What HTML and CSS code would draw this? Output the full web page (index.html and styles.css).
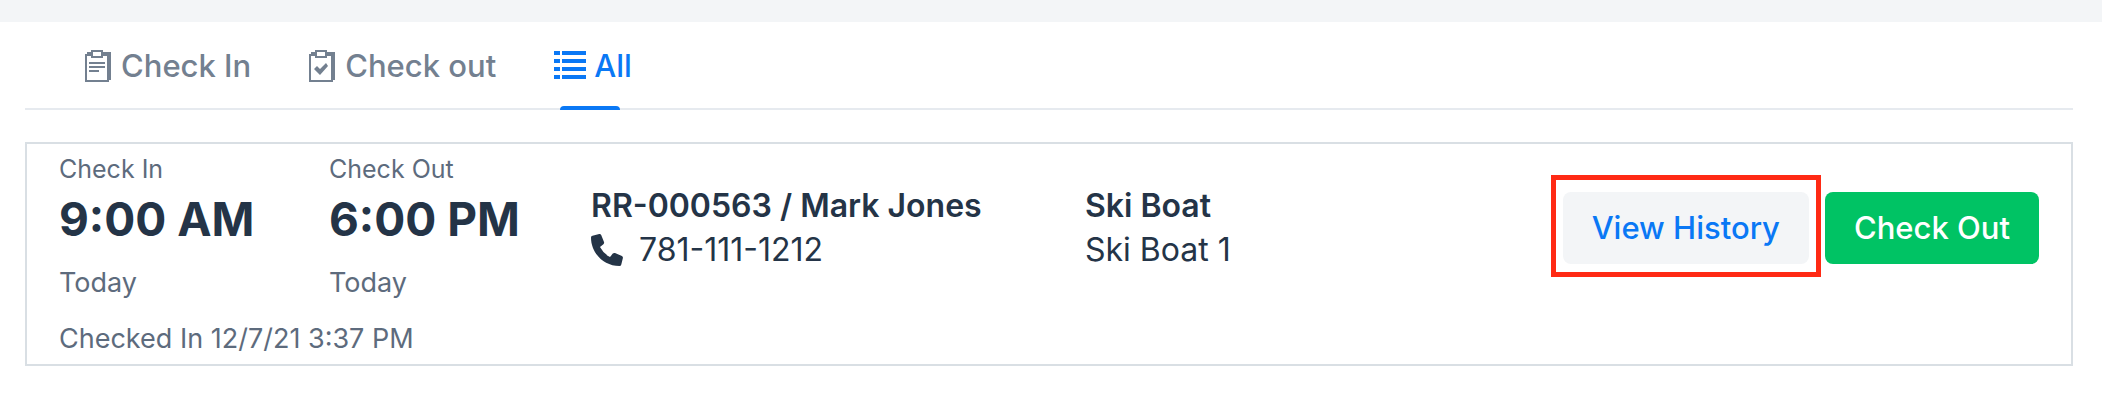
FILE: index.html
```html
<!DOCTYPE html>
<html lang="en">
<head>
    <meta charset="UTF-8">
    <meta name="viewport" content="width=device-width, initial-scale=1.0">
    <title>Reservations</title>
    <link rel="stylesheet" href="styles.css">
</head>
<body>
    <main class="container">
        <nav class="tabs">
            <a href="#" class="tab">
                <svg class="tab-icon" width="26" height="32" viewBox="0 0 26 32" fill="currentColor">
                    <path fill-rule="evenodd" d="M0 4H2V2H6V0H18V2H26V30H24V32H0ZM2 6V30H22V6H18V8H6V6ZM8 2V6H16V2Z"/>
                    <path d="M4 12H20V14H4ZM4 16H20V18H4ZM4 20H14V22H4Z"/>
                </svg>
                <span>Check In</span>
            </a>
            <a href="#" class="tab">
                <svg class="tab-icon" width="26" height="32" viewBox="0 0 26 32" fill="currentColor">
                    <path fill-rule="evenodd" d="M0 4H2V2H6V0H18V2H26V30H24V32H0ZM2 6V30H22V6H18V8H6V6ZM8 2V6H16V2Z"/>
                    <path d="M5 19L8 16L11 19L17 13L19 16L11 25Z"/>
                </svg>
                <span>Check out</span>
            </a>
            <a href="#" class="tab active">
                <svg class="tab-icon" width="32" height="32" viewBox="0 0 32 32" fill="currentColor">
                    <path d="M0 1H6V5H0ZM8 1H32V5H8ZM0 9H6V13H0ZM8 9H32V13H8ZM0 17H6V21H0ZM8 17H32V21H8ZM0 25H6V29H0ZM8 25H32V29H8Z"/>
                </svg>
                <span>All</span>
            </a>
        </nav>

        <section class="card">
            <div class="card-main">
                <div class="time-col">
                    <div class="label">Check In</div>
                    <div class="time">9:00 AM</div>
                    <div class="day">Today</div>
                </div>
                <div class="time-col">
                    <div class="label">Check Out</div>
                    <div class="time">6:00 PM</div>
                    <div class="day">Today</div>
                </div>
                <div class="info">
                    <div class="info-title">RR-000563 / Mark Jones</div>
                    <div class="phone">
                        <svg width="32" height="32" viewBox="0 0 32 32" fill="currentColor">
                            <path d="M1.5 1.8L8.2 .1Q9.600 -.1 10.200 1.100L13 8Q13.400 9.300 12.400 10.200L9 13Q12.500 19.800 19 23L21.800 19.600Q22.700 18.600 24 19L30.900 21.900Q32.100 22.600 31.900 23.900L30.300 30.500Q29.900 32 28.500 32C12.500 32 0 19 0 3.500Q0 2.100 1.500 1.800Z"/>
                        </svg>
                        <span>781-111-1212</span>
                    </div>
                </div>
                <div class="info">
                    <div class="info-title">Ski Boat</div>
                    <div>Ski Boat 1</div>
                </div>
                <div class="actions">
                    <div class="highlight">
                        <button type="button" class="btn btn-light">View History</button>
                    </div>
                    <button type="button" class="btn btn-success">Check Out</button>
                </div>
            </div>
            <div class="status">Checked In 12/7/21 3:37 PM</div>
        </section>
    </main>
</body>
</html>
```

FILE: styles.css
```css
:root {
    --primary-color: #0a78f5;
    --success-color: #00c364;
    --text-color: #243447;
    --label-color: #5d6b7d;
    --tab-color: #738090;
    --light-color: #f3f5f7;
    --border-color: #d9dfe4;
}

* {
    box-sizing: border-box;
}

body {
    margin: 0;
    border-top: 22px solid var(--light-color);
    background-color: white;
    color: var(--text-color);
    font-family: Inter, "Liberation Sans", sans-serif;
    font-size: 31px;
    line-height: 44px;
}

.container {
    padding: 0 29px 0 25px;
}

.tabs {
    display: flex;
    gap: 58px;
    padding-left: 60px;
    border-bottom: 2px solid #e6eaef;
}

.tab {
    position: relative;
    display: flex;
    align-items: center;
    gap: 10px;
    height: 86px;
    padding-top: 2px;
    color: var(--tab-color);
    font-weight: 500;
    text-decoration: none;
}

.tab.active {
    gap: 8px;
    color: var(--primary-color);
}

.tab.active::after {
    content: "";
    position: absolute;
    bottom: -2px;
    left: 6px;
    right: 12px;
    height: 4px;
    border-radius: 4px 4px 0 0;
    background-color: var(--primary-color);
}

.card {
    margin-top: 32px;
    padding: 7px 32px;
    border: 2px solid var(--border-color);
}

.card-main {
    display: grid;
    grid-template-columns: 270px 262px 494px 1fr auto;
    align-items: center;
}

.time-col {
    padding-bottom: 4px;
}

.label,
.day,
.status {
    color: var(--label-color);
    font-size: 27px;
    line-height: 36px;
}

.label {
    font-size: 25px;
}

.time {
    font-size: 46px;
    font-weight: 700;
    line-height: 64px;
}

.day {
    margin-top: 14px;
}

.status {
    margin-top: 16px;
}

.info {
    font-size: 32px;
}

.info-title {
    font-weight: 600;
}

.phone {
    display: flex;
    align-items: center;
    gap: 16px;
}

.actions {
    display: flex;
    gap: 16px;
}

.highlight {
    position: relative;
}

.highlight::after {
    content: "";
    position: absolute;
    inset: -17px -12px -13px;
    border: 5px solid #ff2a14;
    pointer-events: none;
}

.btn {
    height: 72px;
    padding: 0 29px;
    border: none;
    border-radius: 8px;
    font: inherit;
    font-weight: 500;
    cursor: pointer;
}

.btn-light {
    background-color: var(--light-color);
    color: var(--primary-color);
}

.btn-success {
    background-color: var(--success-color);
    color: white;
}
```
